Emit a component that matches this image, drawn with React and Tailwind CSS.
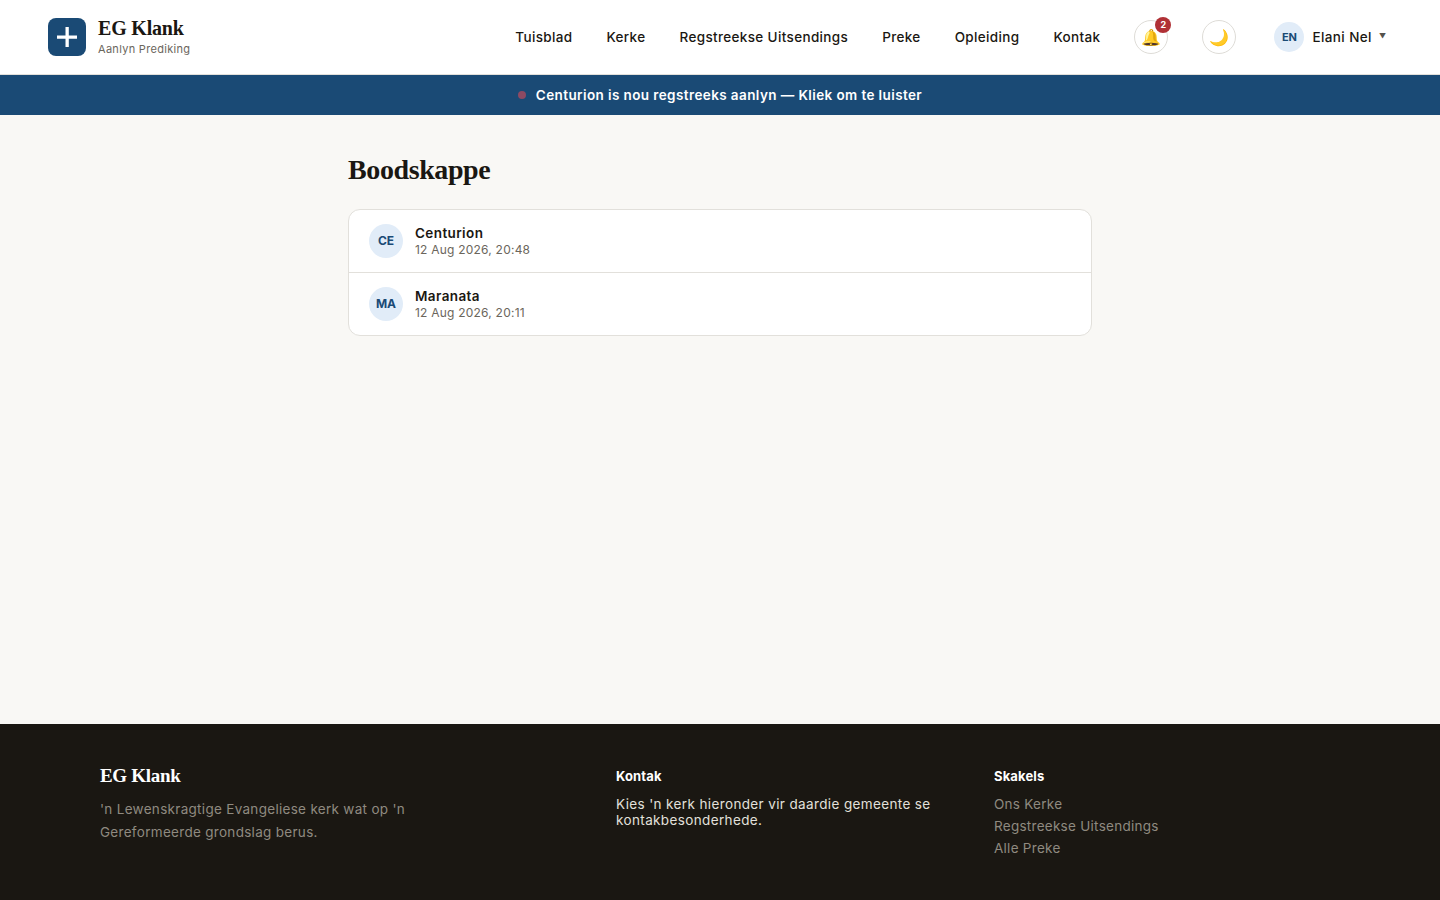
const sans = { fontFamily: "Inter, sans-serif" };

const navItems = ["Tuisblad", "Kerke", "Regstreekse Uitsendings", "Preke", "Opleiding", "Kontak"];

const threads = [
  { initials: "CE", name: "Centurion", date: "12 Aug 2026, 20:48" },
  { initials: "MA", name: "Maranata", date: "12 Aug 2026, 20:11" },
];

function Header() {
  return (
    <header className="flex h-[75px] items-center justify-between border-b border-[#e2e0db] bg-white pl-12 pr-[54px]">
      <div className="flex items-center gap-3">
        <div className="flex h-[38px] w-[38px] items-center justify-center rounded-lg bg-[#1a4a75]">
          <svg width="22" height="22" viewBox="0 0 22 22" fill="#fff">
            <path d="M9.500 1h3.300v8.500H21v3.300h-8.200V21H9.500v-8.200H1V9.500h8.500z" />
          </svg>
        </div>
        <div className="-mt-[3px]">
          <div className="font-['Liberation_Serif',serif] text-[20px] leading-[26px] font-bold tracking-[-0.2px] text-[#1a1712]">EG Klank</div>
          <div className="text-[11px] leading-[16px] tracking-[0.3px] text-[#6b665c]">Aanlyn Prediking</div>
        </div>
      </div>
      <div className="flex items-center">
        <nav className="flex items-center gap-[34px] text-[13.500px] font-medium tracking-[0.35px] text-[#1a1712]">
          {navItems.map((item) => (
            <a key={item} href="#">{item}</a>
          ))}
        </nav>
        <button className="relative ml-[34px] flex h-[34px] w-[34px] items-center justify-center rounded-full border border-[#dedcd7] bg-white text-base">
          🔔
          <span className="absolute -top-[4px] -right-[4px] flex h-4 w-4 items-center justify-center rounded-full bg-[#b03035] text-[9px] font-bold text-white">2</span>
        </button>
        <button className="ml-[34px] flex h-[34px] w-[34px] items-center justify-center rounded-full border border-[#dedcd7] bg-white text-base">
          🌙
        </button>
        <div className="ml-[38px] flex items-center gap-2">
          <div className="flex h-[30px] w-[30px] items-center justify-center rounded-full bg-[#e1ecf8] text-[11px] font-bold text-[#1a4a75]">EN</div>
          <span className="text-[13.500px] font-medium tracking-[0.4px] text-[#1a1712]">Elani Nel</span>
          <span className="ml-[-1px] text-[7px] text-[#55524c]">▼</span>
        </div>
      </div>
    </header>
  );
}

export default function App() {
  return (
    <div className="flex min-h-[900px] flex-col bg-[#f9f8f5]" style={sans}>
      <Header />
      <a href="#" className="flex h-10 items-center justify-center gap-[10px] bg-[#1a4a75] text-[13.500px] font-semibold tracking-[0.4px] text-white">
        <span className="h-2 w-2 rounded-full bg-[#8d4a63]"></span>
        Centurion is nou regstreeks aanlyn — Kliek om te luister
      </a>
      <main className="mx-auto w-[744px] flex-1 pt-[38px]">
        <h1 className="mb-[22px] font-['Liberation_Serif',serif] text-[28px] leading-[34px] font-bold tracking-[-0.4px] text-[#1a1712]">Boodskappe</h1>
        <div className="overflow-hidden rounded-xl border border-[#e2e0db] bg-white">
          {threads.map((t, i) => (
            <div key={t.initials} className={`flex items-center gap-3 px-5 ${i > 0 ? "h-[63px] border-t border-[#e2e0db]" : "h-[62px]"}`}>
              <div className="flex h-[34px] w-[34px] items-center justify-center rounded-full bg-[#e1ecf8] text-xs font-bold text-[#1a4a75]">{t.initials}</div>
              <div className="-mt-[1px]">
                <div className="text-[13.500px] leading-[18px] font-semibold tracking-[0.4px] text-[#1a1712]">{t.name}</div>
                <div className="text-xs leading-[16px] tracking-[0.22px] text-[#6b665c]">{t.date}</div>
              </div>
            </div>
          ))}
        </div>
      </main>
      <footer className="grid h-[176px] grid-cols-[516px_378px_1fr] bg-[#1a1712] px-[100px] pt-10">
        <div>
          <div className="font-['Liberation_Serif',serif] text-[19px] leading-[24px] font-bold tracking-[-0.3px] text-white">EG Klank</div>
          <p className="mt-[10px] w-[320px] text-[13.500px] leading-[23px] tracking-[0.3px] text-[#8f8a80]">'n Lewenskragtige Evangeliese kerk wat op 'n Gereformeerde grondslag berus.</p>
        </div>
        <div className="pt-[4px]">
          <div className="text-[13px] leading-[16px] font-bold tracking-[0.15px] text-white">Kontak</div>
          <p className="mt-[12px] w-[330px] text-[13.500px] leading-[16px] tracking-[0.37px] text-[#e2e0db]">Kies 'n kerk hieronder vir daardie gemeente se kontakbesonderhede.</p>
        </div>
        <div className="pt-[4px]">
          <div className="text-[13px] leading-[16px] font-bold tracking-[0.15px] text-white">Skakels</div>
          <ul className="mt-[12px] flex flex-col gap-[6px] text-[13.500px] leading-[16px] tracking-[0.27px] text-[#8f8a80]">
            <li>Ons Kerke</li>
            <li>Regstreekse Uitsendings</li>
            <li>Alle Preke</li>
          </ul>
        </div>
      </footer>
    </div>
  );
}
